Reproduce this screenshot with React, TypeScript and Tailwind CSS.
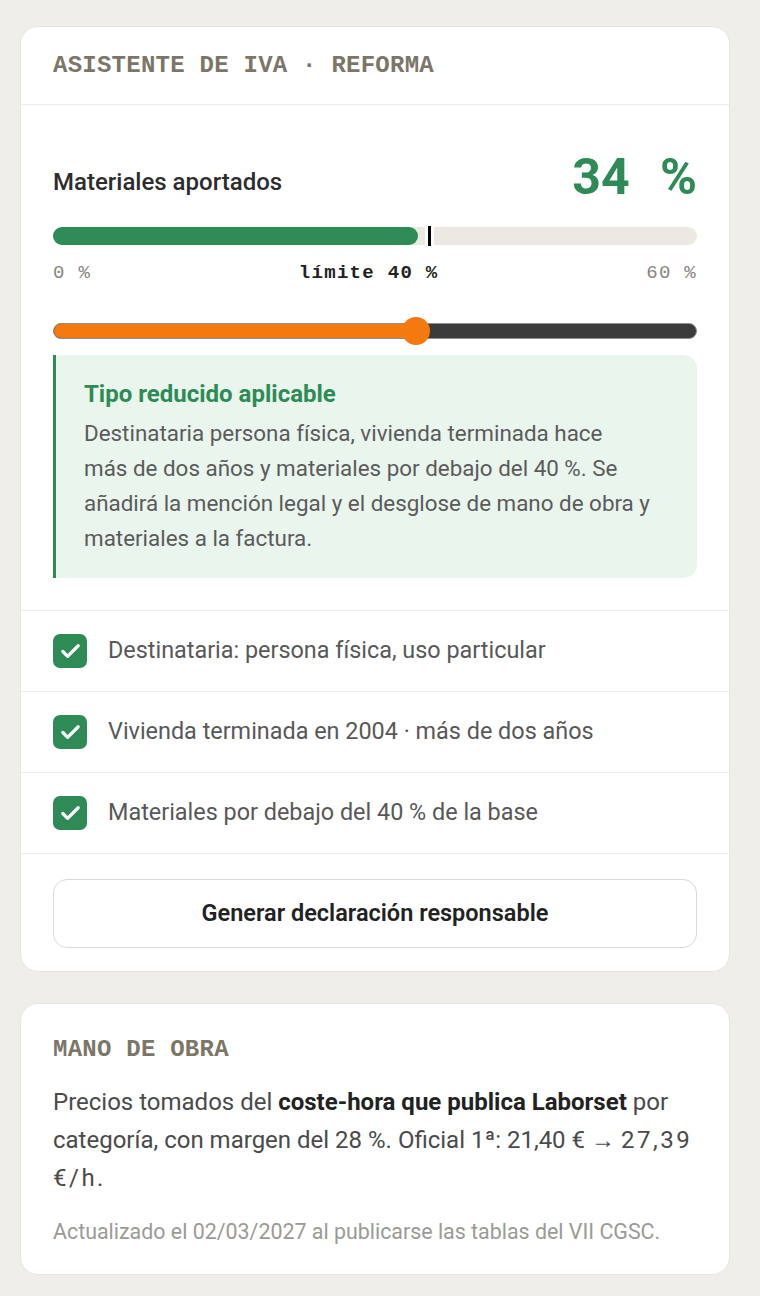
import { Check } from "lucide-react";

const checks = [
  "Destinataria: persona física, uso particular",
  "Vivienda terminada en 2004 · más de dos años",
  "Materiales por debajo del 40 % de la base",
];

const mono = "font-['Liberation_Mono',monospace]";

function ProgressBar({ value, max }: { value: number; max: number }) {
  const pct = (value / max) * 100;
  return (
    <div className="relative mt-[25px] h-[18px] rounded-full bg-[#ece9e2]">
      <div className="h-full rounded-full bg-[#2e8b55]" style={{ width: `${pct}%` }} />
      <div className="absolute left-[58.3%] top-[-1px] h-[20px] w-[3px] bg-black shadow-[0_0_0_3px_#fff]" />
    </div>
  );
}

function Slider({ pct }: { pct: number }) {
  return (
    <div className="relative mt-[32px] flex h-[28px] items-center">
      <div className="flex h-[16px] w-full overflow-hidden rounded-full border-[1.5px] border-[#8e8e8e] bg-[#3b3b3b]">
        <div className="h-full bg-[#f47a10]" style={{ width: `${pct}%` }} />
      </div>
      <div
        className="absolute top-0 h-[28px] w-[28px] -translate-x-1/2 rounded-full bg-[#f47a10]"
        style={{ left: `${pct}%` }}
      />
    </div>
  );
}

export default function App() {
  return (
    <div className="min-h-screen bg-[#efeee9] pt-[26px] pr-[30px] pb-6 pl-5 font-['Roboto',sans-serif]">
      <div className="rounded-[18px] border border-[#e7e5df] bg-white">
        <div className="flex h-[78px] items-center border-b border-[#eeece8] px-8">
          <span className={`${mono} text-[24px] font-bold leading-7 tracking-[0.25px] text-[#7b7668]`}>
            ASISTENTE DE IVA · REFORMA
          </span>
        </div>

        <div className="px-8 pt-[47px] pb-8">
          <div className="flex items-end justify-between">
            <span className="mb-[6px] text-[24px] font-medium leading-7 text-[#2d2d2d]">
              Materiales aportados
            </span>
            <span className="text-[50px] font-bold leading-none text-[#2e8b55] [word-spacing:18px]">
              34 %
            </span>
          </div>

          <ProgressBar value={34} max={60} />

          <div className={`${mono} mt-[16px] flex justify-between text-[19px] leading-6 tracking-[1.3px]`}>
            <span className="text-[#8a857a]">0 %</span>
            <span className="font-bold text-[#222]">límite 40 %</span>
            <span className="text-[#8a857a]">60 %</span>
          </div>

          <Slider pct={56.4} />

          <div className="mt-[10px] rounded-r-[14px] border-l-[3px] border-[#2e8b55] bg-[#eaf5ee] pt-6 pr-6 pb-[22px] pl-7">
            <div className="text-[24px] font-bold leading-[30px] text-[#2e8b55]">Tipo reducido aplicable</div>
            <p className="mt-[7px] max-w-[578px] text-[22.4px] leading-[35px] text-[#5b5b5b]">
              Destinataria persona física, vivienda terminada hace más{"\u00a0"}de dos años y materiales por
              debajo del 40 %. Se añadirá la mención legal y el desglose de mano de obra y materiales a
              la factura.
            </p>
          </div>
        </div>

        <ul className="border-b border-[#eeece8]">
          {checks.map((c) => (
            <li key={c} className="flex h-[81px] items-center gap-[21px] border-t border-[#eeece8] px-8">
              <span className="flex h-[34px] w-[34px] shrink-0 items-center justify-center rounded-[7px] bg-[#2e8b55]">
                <Check className="h-[23px] w-[23px] text-white" strokeWidth={3.4} />
              </span>
              <span className="text-[23.4px] text-[#585858]">{c}</span>
            </li>
          ))}
        </ul>

        <div className="px-8 pt-[25px] pb-[23px]">
          <button className="h-[69px] w-full rounded-[14px] border-[1.5px] border-[#d9d9d6] bg-white text-[23.5px] font-semibold text-[#222]">
            Generar declaración responsable
          </button>
        </div>
      </div>

      <div className="mt-[31px] rounded-[18px] border border-[#e7e5df] bg-white px-8 pt-8 pb-[28px]">
        <div className={`${mono} text-[24px] font-bold leading-7 tracking-[0.25px] text-[#7b7668]`}>
          MANO DE OBRA
        </div>
        <p className="mt-[19px] text-[24px] leading-[38px] text-[#4a4a4a]">
          Precios tomados del <strong className="font-bold text-[#222]">coste-hora que publica Laborset</strong>{" "}
          por categoría, con margen del 28 %. Oficial 1ª: 21,40 € → <span className="tracking-[2.5px]">27,39 €/h.</span>
        </p>
        <p className="mt-[21px] text-[21.4px] leading-7 text-[#9b9a95]">
          Actualizado el 02/03/2027 al publicarse las tablas del VII CGSC.
        </p>
      </div>
    </div>
  );
}
